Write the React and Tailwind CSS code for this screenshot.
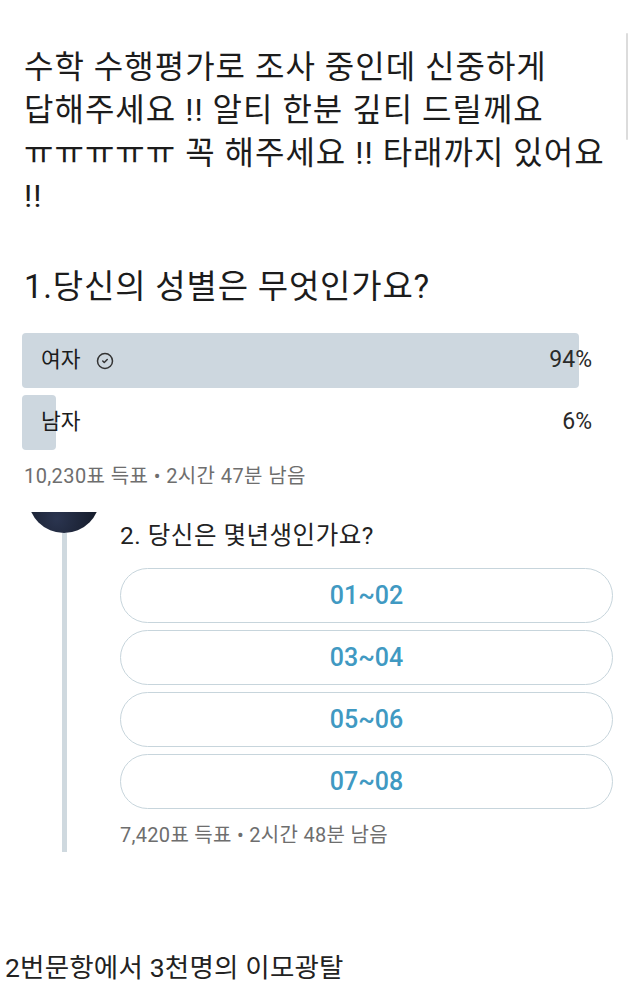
import { CircleCheck } from 'lucide-react'

const results = [
  { label: '여자', pct: '94%', width: 557, voted: true },
  { label: '남자', pct: '6%', width: 34, voted: false },
]

const options = ['01~02', '03~04', '05~06', '07~08']

export default function App() {
  return (
    <div className="relative w-[640px] h-[1008px] bg-white overflow-hidden text-[#1c1c1c] font-['Roboto','Noto_Sans_CJK_KR',sans-serif]">
      {/* scrollbar sliver at top right */}
      <div className="absolute left-[626px] top-[33px] w-[2px] h-[107px] rounded-full bg-[#dcdcdc]" />

      {/* post text */}
      <p className="pl-[24px] pr-[20px] pt-[46px] text-[32px] leading-[43px] tracking-[1px]">
        수학 수행평가로 조사 중인데 신중하게
        <br />
        답해주세요 !! 알티 한분 깊티 드릴께요
        <br />
        ㅠㅠㅠㅠㅠ 꼭 해주세요 !! 타래까지 있어요
        <br />
        !!
      </p>

      {/* poll 1 */}
      <h2 className="mt-[49px] pl-[24px] text-[33px] leading-[40px] tracking-[0.8px]">1.당신의 성별은 무엇인가요?</h2>

      <div className="mt-[26px] ml-[22px] w-[571px] flex flex-col gap-[7px]">
        {results.map((r) => (
          <div key={r.label} className="relative h-[55px] flex items-center justify-between pl-[19px] pr-[1px]">
            <div className="absolute left-0 top-0 bottom-0 rounded-[4px] bg-[#cdd7df]" style={{ width: r.width }} />
            <span className="relative flex items-center gap-[15px] text-[21.5px]">
              {r.label}
              {r.voted && <CircleCheck size={18} strokeWidth={2} className="text-[#333]" />}
            </span>
            <span className="relative text-[23px] text-[#2a2a2a]">{r.pct}</span>
          </div>
        ))}
      </div>

      <div className="mt-[14px] pl-[24px] text-[20px] leading-[24px] tracking-[0.4px] text-[#6e6e6e]">10,230표 득표 • 2시간 47분 남음</div>

      {/* thread: poll 2 */}
      <div className="mt-[24px] flex">
        <div className="ml-[28px] w-[72px] flex flex-col items-center">
          <div className="w-[72px] h-[21px] overflow-hidden">
            <div className="-mt-[51px] w-[72px] h-[72px] rounded-full bg-[radial-gradient(circle_at_40%_80%,#2b3550,#141a28_60%,#0d111c)]" />
          </div>
          <div className="w-[5px] h-[319px] bg-[#cfd9df]" />
        </div>

        <div className="ml-[20px] w-[493px]">
          <div className="mt-[10px] text-[24.5px] leading-[28px] tracking-[0.5px] text-[#222]">2. 당신은 몇년생인가요?</div>
          <div className="mt-[18px] flex flex-col gap-[7px]">
            {options.map((o) => (
              <div
                key={o}
                className="h-[55px] rounded-full border-[1.5px] border-[#c7d5dc] flex items-center justify-center text-[25px] font-medium text-[#4099c2]"
              >
                {o}
              </div>
            ))}
          </div>
          <div className="mt-[14px] text-[20px] leading-[24px] tracking-[0.3px] text-[#6e6e6e]">7,420표 득표 • 2시간 48분 남음</div>
        </div>
      </div>

      {/* caption */}
      <div className="mt-[100px] pl-[5px] text-[26.5px] leading-[32px] tracking-[0.2px] text-[#222]">
        2번문항에서 3천명의 이모광탈
      </div>
    </div>
  )
}
